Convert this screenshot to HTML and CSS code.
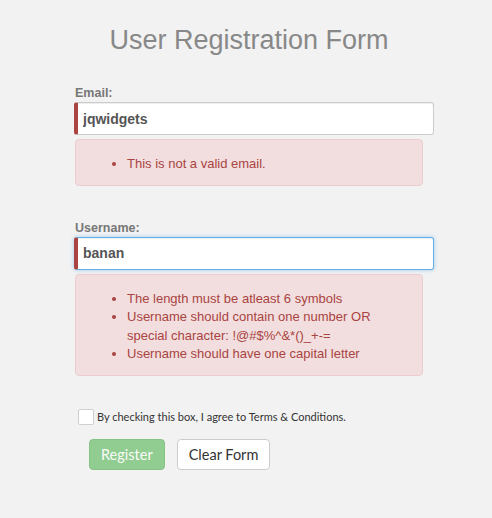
FILE: index.html
```html
<!DOCTYPE html>
<html lang="en">
<head>
  <meta charset="UTF-8" />
  <title>User Registration Form</title>
  <link rel="stylesheet" href="styles.css">
</head>
<body>
  <h1 class="title">User Registration Form</h1>

  <form class="form">
    <label class="field-label" for="email">Email:</label>
    <input class="field invalid" type="text" id="email" value="jqwidgets" />
    <div class="error-box">
      <ul>
        <li>This is not a valid email.</li>
      </ul>
    </div>

    <label class="field-label spaced" for="username">Username:</label>
    <input class="field invalid focused" type="text" id="username" value="banan" />
    <div class="error-box">
      <ul>
        <li>The length must be atleast 6 symbols</li>
        <li>Username should contain one number OR special character: !@#$%^&amp;*()_+-=</li>
        <li>Username should have one capital letter</li>
      </ul>
    </div>

    <div class="terms">
      <input type="checkbox" id="agree" class="check" />
      <label for="agree">By checking this box, I agree to Terms &amp; Conditions.</label>
    </div>

    <div class="button-group">
      <button type="button" class="btn btn-register" disabled>Register</button>
      <button type="reset" class="btn btn-clear">Clear Form</button>
    </div>
  </form>
</body>
</html>
```

FILE: styles.css
```css
body {
  margin: 0;
  background-color: #f2f2f2;
  font-family: "Liberation Sans", Arial, sans-serif;
  color: #333;
}

.title {
  margin: 24px 0 28px;
  padding-left: 6px;
  text-align: center;
  font-size: 27px;
  line-height: 32px;
  font-weight: normal;
  color: #888;
}

.form {
  width: 360px;
  margin-left: 74px;
}

.field-label {
  display: block;
  padding-left: 1px;
  font-size: 12.5px;
  line-height: 18px;
  font-weight: bold;
  color: #777;
}

.field-label.spaced {
  margin-top: 33px;
}

.field {
  display: block;
  box-sizing: border-box;
  width: 360px;
  height: 33px;
  margin: 0;
  padding: 0 5px;
  border: 1px solid #ccc;
  border-radius: 3px;
  background: #fff;
  box-shadow: inset 0 1px 1px rgba(0, 0, 0, 0.075);
  font-family: "Liberation Sans", Arial, sans-serif;
  font-size: 14px;
  font-weight: bold;
  color: #555;
  outline: none;
}

.field.invalid {
  border-left: 4px solid #a94442;
}

.field.focused {
  border-color: #66afe9;
  border-left-color: #a94442;
  box-shadow: inset 0 1px 1px rgba(0, 0, 0, 0.075), 0 0 4px rgba(102, 175, 233, 0.6);
}

.error-box {
  width: 348px;
  box-sizing: border-box;
  margin: 4px 0 0 1px;
  padding: 15px 15px 11px 0;
  background-color: #f2dede;
  border: 1px solid #ebccd1;
  border-radius: 4px;
  color: #a94442;
  font-size: 13px;
  line-height: 18.5px;
}

.error-box ul {
  margin: 0;
  padding-left: 51px;
}

.terms {
  display: flex;
  align-items: center;
  margin: 33px 0 0 4px;
  font-family: "Lato", "Open Sans", sans-serif;
  font-size: 11px;
  color: #333;
}

.check {
  appearance: none;
  -webkit-appearance: none;
  width: 16px;
  height: 16px;
  margin: 0 3px 0 0;
  background: #fff;
  border: 1px solid #d0d0d0;
  border-radius: 2px;
}

.button-group {
  display: flex;
  gap: 12px;
  margin: 14px 0 0 15px;
}

.btn {
  height: 31px;
  padding: 0 11px;
  border-radius: 4px;
  font-family: "Lato", "Open Sans", sans-serif;
  font-size: 14.5px;
  white-space: nowrap;
  cursor: pointer;
}

.btn-register {
  background-color: #91cc91;
  border: 1px solid #86c486;
  color: #f8fcf8;
  cursor: not-allowed;
}

.btn-clear {
  background-color: #fff;
  border: 1px solid #ccc;
  color: #333;
}
```
